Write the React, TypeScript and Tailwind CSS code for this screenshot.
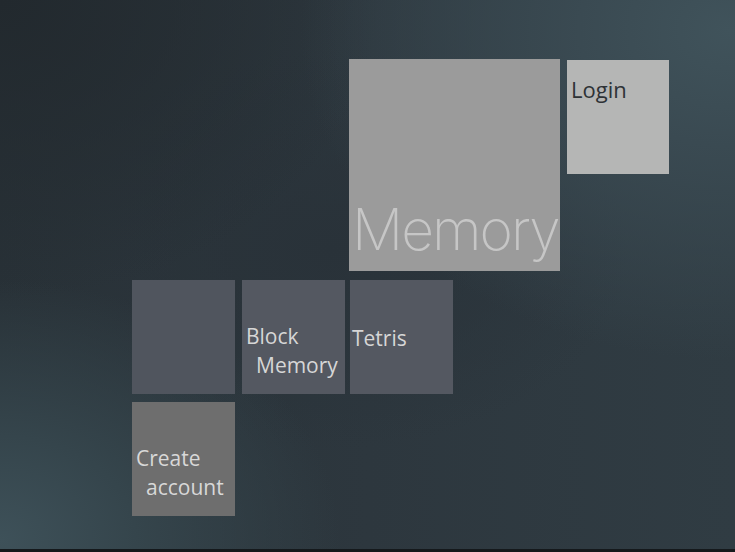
const tileText = "font-['Segoe_UI','Open_Sans','Noto_Sans',sans-serif]"

const Tile = ({ className, children }: { className: string; children?: React.ReactNode }) => (
  <div className={`shrink-0 ${className}`}>{children}</div>
)

export default function App() {
  return (
    <div className="relative h-[552px] w-[735px] overflow-hidden bg-[#2c363d] bg-[radial-gradient(ellipse_430px_330px_at_730px_30px,#40535b_0%,#3a4a52_35%,transparent_100%),radial-gradient(ellipse_340px_260px_at_0px_540px,#3e5159_0%,#35454c_40%,transparent_100%),radial-gradient(ellipse_380px_300px_at_0px_0px,#22292e_0%,transparent_100%),radial-gradient(ellipse_300px_200px_at_330px_250px,#293239_0%,transparent_100%),linear-gradient(90deg,#283137_0%,#2d373e_50%,#303c43_100%)]">
      <div className="flex flex-col pt-[59px]">
        <div className="flex items-start pl-[349px]">
          <Tile className="flex h-[212px] w-[211px] items-end bg-[#9b9b9b] pb-[13px] pl-[3px]">
            <span className="font-['Inter',sans-serif] text-[57px] font-extralight leading-none tracking-[-2px] text-[#c6c6c6]">
              Memory
            </span>
          </Tile>
          <Tile className="ml-[7px] mt-px h-[114px] w-[102px] bg-[#b5b6b5] pl-[4px] pt-[18px]">
            <span className={`${tileText} text-[22px] leading-none text-[#2e3236]`}>Login</span>
          </Tile>
        </div>

        <div className="mt-[9px] flex pl-[132px]">
          <Tile className="h-[114px] w-[103px] bg-[#50555e]" />
          <Tile className="ml-[7px] flex h-[114px] w-[103px] flex-col bg-[#545861] pl-[4px] pt-[42px]">
            <span className={`${tileText} text-[21px] leading-[29px] text-[#d6d6d6]`}>Block</span>
            <span className={`${tileText} ml-[10px] text-[21px] leading-[29px] text-[#d6d6d6]`}>Memory</span>
          </Tile>
          <Tile className="ml-[5px] h-[114px] w-[103px] bg-[#545861] pl-[2px] pt-[44px]">
            <span className={`${tileText} text-[21px] leading-[29px] text-[#d6d6d6]`}>Tetris</span>
          </Tile>
        </div>

        <div className="mt-[8px] flex pl-[132px]">
          <Tile className="flex h-[114px] w-[103px] flex-col bg-[#6e6e6e] pl-[4px] pt-[42px]">
            <span className={`${tileText} text-[21px] leading-[29px] text-[#d8d8d8]`}>Create</span>
            <span className={`${tileText} ml-[10px] text-[21px] leading-[29px] text-[#d8d8d8]`}>account</span>
          </Tile>
        </div>
      </div>
      <div className="absolute bottom-0 left-0 h-[3px] w-full bg-[#15191c]" />
    </div>
  )
}
